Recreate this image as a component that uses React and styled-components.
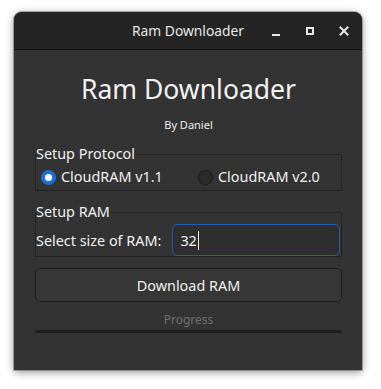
import React from "react";
import styled, { createGlobalStyle } from "styled-components";

const Global = createGlobalStyle`
  html, body { margin: 0; padding: 0; background: #ffffff; }
  body { font-family: "Noto Sans", "DejaVu Sans", sans-serif; }
`;

const Page = styled.div`
  padding: 12px 19px 19px 14px;
`;

const Window = styled.div`
  width: 348px;
  height: 358px;
  background: #333333;
  border-radius: 8px 8px 0 0;
  box-shadow: 0 2px 9px rgba(0, 0, 0, 0.45), 0 0 0 1px rgba(0, 0, 0, 0.25);
  display: flex;
  flex-direction: column;
  overflow: hidden;
  color: #f0f0f0;
`;

const TitleBar = styled.div`
  height: 37px;
  flex: none;
  background: #242424;
  border-bottom: 1px solid #121212;
  display: grid;
  grid-template-columns: 1fr auto 1fr;
  align-items: center;
`;

const WindowTitle = styled.div`
  grid-column: 2;
  font-size: 13.8px;
  color: #e8e8e8;
  padding-bottom: 1px;
`;

const Controls = styled.div`
  grid-column: 3;
  justify-self: end;
  display: flex;
  gap: 10px;
  padding-right: 6px;
`;

const CtrlButton = styled.div`
  width: 24px;
  height: 24px;
  display: flex;
  align-items: center;
  justify-content: center;
  color: #e6e6e6;
`;

const Content = styled.div`
  flex: 1;
  display: flex;
  flex-direction: column;
  padding: 0 20px 0 21px;
`;

const Heading = styled.h1`
  margin: 21px 0 0;
  font-weight: 400;
  font-size: 26.5px;
  line-height: 36px;
  text-align: center;
  color: #f2f2f2;
`;

const Byline = styled.div`
  margin-top: 11px;
  font-size: 11px;
  line-height: 14px;
  text-align: center;
  color: #eeeeee;
`;

const Group = styled.fieldset`
  margin: ${(p) => p.$top}px 0 0;
  padding: 0;
  border: 1px solid #232323;
  border-radius: 0;
  min-width: 0;
`;

const Legend = styled.legend`
  padding: 0;
  margin-left: 0;
  font-size: 14.4px;
  line-height: 14px;
  color: #f0f0f0;
`;

const RadioRow = styled.div`
  display: grid;
  grid-template-columns: 157px 1fr;
  padding: 7px 0 4px 5px;
  align-items: center;
`;

const Option = styled.label`
  display: flex;
  align-items: center;
  gap: 5px;
  font-size: 14.4px;
  line-height: 18px;
  color: #f0f0f0;
`;

const RadioDot = styled.span`
  width: 15px;
  height: 15px;
  box-sizing: border-box;
  border-radius: 50%;
  flex: none;
  display: flex;
  align-items: center;
  justify-content: center;
  background: ${(p) => (p.$checked ? "#1c71d8" : "#2b2b2b")};
  border: 1px solid ${(p) => (p.$checked ? "#1c71d8" : "#171717")};
  &::after {
    content: "";
    display: ${(p) => (p.$checked ? "block" : "none")};
    width: 7px;
    height: 7px;
    border-radius: 50%;
    background: #ffffff;
  }
`;

const FieldRow = styled.div`
  display: flex;
  align-items: center;
  gap: 11px;
  padding: 5px 1px 0 0;
`;

const FieldLabel = styled.span`
  font-size: 14.4px;
  color: #f0f0f0;
  white-space: nowrap;
`;

const TextField = styled.div`
  flex: 1;
  height: 32px;
  box-sizing: border-box;
  border: 1px solid #1f5fb0;
  border-radius: 5px;
  background: #2e2e2e;
  display: flex;
  align-items: center;
  padding-left: 7px;
  font-size: 14.4px;
  color: #f2f2f2;
`;

const Caret = styled.span`
  display: inline-block;
  width: 1px;
  height: 19px;
  background: #f2f2f2;
  margin-left: 1px;
`;

const Button = styled.button`
  margin-top: 11px;
  height: 34px;
  border: 1px solid #1c1c1c;
  border-radius: 5px;
  background: #363636;
  color: #f0f0f0;
  font-family: inherit;
  font-size: 14.4px;
  padding: 0;
`;

const ProgressLabel = styled.div`
  margin-top: 10px;
  text-align: center;
  font-size: 12px;
  line-height: 16px;
  color: #707070;
`;

const ProgressTrack = styled.div`
  margin-top: 2px;
  height: 3px;
  border-radius: 2px;
  background: #1f1f1f;
`;

export default function App() {
  return (
    <>
      <Global />
      <Page>
        <Window>
          <TitleBar>
            <WindowTitle>Ram Downloader</WindowTitle>
            <Controls>
              <CtrlButton>
                <svg width="10" height="10" viewBox="0 0 10 10">
                  <rect x="1" y="8" width="8" height="2" fill="currentColor" />
                </svg>
              </CtrlButton>
              <CtrlButton>
                <svg width="10" height="10" viewBox="0 0 10 10">
                  <rect x="2" y="2" width="6" height="6" fill="none" stroke="currentColor" strokeWidth="2" />
                </svg>
              </CtrlButton>
              <CtrlButton>
                <svg width="10" height="10" viewBox="0 0 10 10">
                  <path d="M1.5 1.5 L8.5 8.5 M8.5 1.5 L1.5 8.5" stroke="currentColor" strokeWidth="2" strokeLinecap="square" />
                </svg>
              </CtrlButton>
            </Controls>
          </TitleBar>
          <Content>
            <Heading>Ram Downloader</Heading>
            <Byline>By Daniel</Byline>
            <Group $top={15}>
              <Legend>Setup Protocol</Legend>
              <RadioRow>
                <Option>
                  <RadioDot $checked />
                  CloudRAM v1.1
                </Option>
                <Option>
                  <RadioDot />
                  CloudRAM v2.0
                </Option>
              </RadioRow>
            </Group>
            <Group $top={14}>
              <Legend>Setup RAM</Legend>
              <FieldRow>
                <FieldLabel>Select size of RAM:</FieldLabel>
                <TextField>
                  32
                  <Caret />
                </TextField>
              </FieldRow>
            </Group>
            <Button>Download RAM</Button>
            <ProgressLabel>Progress</ProgressLabel>
            <ProgressTrack />
          </Content>
        </Window>
      </Page>
    </>
  );
}
